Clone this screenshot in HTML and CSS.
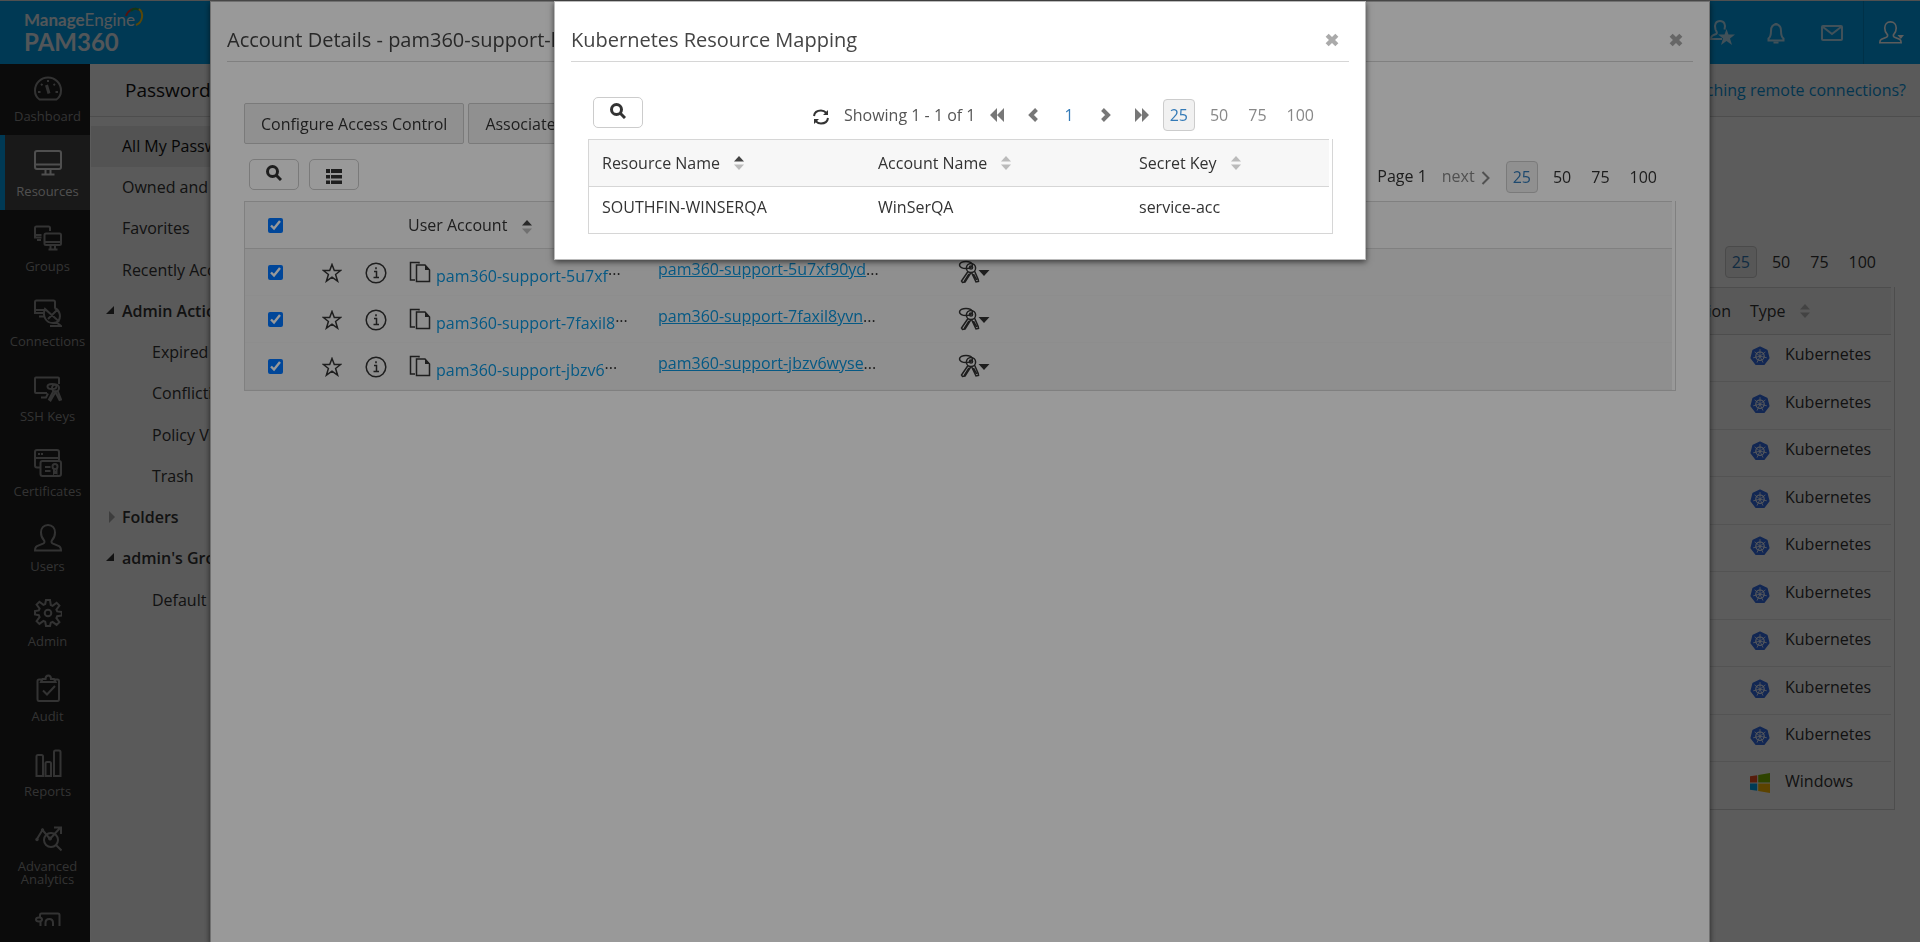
FILE: index.html
```html
<!DOCTYPE html>
<html lang="en">
<head>
    <meta charset="UTF-8">
    <meta name="viewport" content="width=device-width, initial-scale=1.0">
    <title>ManageEngine PAM360</title>
    <link rel="stylesheet" href="styles.css">
</head>
<body>

<!-- shared icons -->
<svg class="sprite" aria-hidden="true">
    <symbol id="i-user" viewBox="0 0 28 28"><path d="M14 1C9.500 1 7 4.500 7 8.500c0 3.500 1.200 6 3 7.800 1 1.200.5 2.700-1 3.400L3 22.200c-1.500.7-2 1.800-2 4.300h26c0-2.500-.5-3.600-2-4.300l-6-2.500c-1.500-.7-2-2.200-1-3.400 1.800-1.800 3-4.300 3-7.800C21 4.500 18.500 1 14 1z"/></symbol>
    <symbol id="i-search" viewBox="0 0 16 16"><circle cx="6.500" cy="6.500" r="5"/><path d="M10.300 10.300L15 15"/></symbol>
    <symbol id="i-close" viewBox="0 0 13 13"><path d="M2 2l9 9M11 2l-9 9"/></symbol>
    <symbol id="i-sort" viewBox="0 0 10 14"><path class="sort-up" d="M0 5.500L5 0l5 5.500z"/><path class="sort-down" d="M0 8.500h10L5 14z"/></symbol>
    <symbol id="i-star" viewBox="0 0 20 20"><path d="M10 1.500l2.300 6h6.300l-5 4 2 6.700L10 14.200l-5.600 4 2-6.700-5-4h6.300z"/></symbol>
    <symbol id="i-info" viewBox="0 0 22 22"><circle cx="11" cy="11" r="9.800"/><path d="M9 9.500h2.500v6M8.500 15.500h5.500"/><path d="M10.200 6.300h1.600" stroke-width="2"/></symbol>
    <symbol id="i-copy" viewBox="0 0 22 22"><path d="M6 19H1.500V1.500H10V2.500"/><path d="M7.500 4h8.500l4.500 5v11.500h-13z"/><path class="fold" d="M16 4v5h4.500z"/></symbol>
    <symbol id="i-keys" viewBox="0 0 32 24">
        <ellipse cx="8" cy="5" rx="6.500" ry="3.600"/>
        <circle cx="13" cy="8" r="4.600"/><circle cx="13" cy="7.500" r="1.600"/>
        <path d="M10 11.500L3.500 21l1 1.500 2.500-.5 6-9.500M11 14l-5 8"/>
        <path d="M13.500 12.500L18 22l2.500-.5-.3-2L16.500 11M15.500 14l3.300 6"/>
        <path class="fold" d="M20.500 10h11l-5.500 6z"/>
    </symbol>
    <symbol id="i-k8s" viewBox="0 0 20 20">
        <path fill="#326ce5" stroke="#326ce5" stroke-width="1.500" stroke-linejoin="round" d="M10 1.200l6.900 3.300 1.900 7.500-4.800 6.300H6L1.200 12l1.900-7.500z"/>
        <g fill="none" stroke="#fff"><circle cx="10" cy="10.200" r="4.200" stroke-width="1.100"/>
        <path stroke-width=".8" d="M10 3.200v7M4.600 5.900l5.400 4.300M15.400 5.900L10 10.200M3.200 11.800l6.800-1.600M16.800 11.800L10 10.200M7 16.600l3-6.400M13 16.600l-3-6.400"/></g>
    </symbol>
    <symbol id="i-win" viewBox="0 0 20 20"><path fill="#f25022" d="M0 3.200l7.200-1v7.200H0z"/><path fill="#7fba00" d="M8.200 2L20 0v9.400H8.200z"/><path fill="#00a4ef" d="M0 10.600h7.200v7.200L0 16.800z"/><path fill="#ffb900" d="M8.200 10.600H20V20L8.200 18z"/></symbol>
</svg>

<div class="app">
    <header class="topbar">
        <div class="logo">
            <div class="brand"><b>Manage</b>Engine
                <svg class="swoosh" viewBox="0 0 20 22"><path d="M1 9C3 3 9 0 14 3" stroke="#e5352c"/><path d="M6 4c3-3 8-3 11 1" stroke="#22a24a"/><path d="M14 2c5 4 4 13-3 16" stroke="#f5c518"/></svg>
            </div>
            <div class="product">PAM360</div>
        </div>
        <div class="top-icons">
            <button class="top-button" aria-label="Request access"><svg width="28" height="28" viewBox="0 0 28 28"><path d="M13 20H2c0-3 1-3.500 5-5 2-1 0-3-.5-4.500C5 5 7 2 11 2s6 3 4.500 8.500"/><path class="solid" d="M17.500 10l2 5.500H26l-5 4 2 6.500-5.500-4-5.500 4 2-6.500-5-4h6.500z"/></svg></button>
            <button class="top-button" aria-label="Notifications"><svg width="18" height="22" viewBox="0 0 18 22"><path d="M9 2.500C5.500 2.500 4 5.500 4 9c0 4-.5 6-2.500 7.500V18.500h15v-2C14.500 15 14 13 14 9c0-3.500-1.500-6.500-5-6.500z"/><path d="M7.500 2h3M6.500 20.500h5"/></svg></button>
            <button class="top-button" aria-label="Messages"><svg width="22" height="16" viewBox="0 0 22 16"><rect x="1" y="1" width="20" height="14" rx="1"/><path d="M2 2l9 7 9-7"/></svg></button>
            <button class="top-button profile" aria-label="Profile"><svg width="26" height="24" viewBox="0 0 26 24"><g transform="scale(.82)"><use href="#i-user" width="28" height="28"/></g><path class="solid" d="M18.500 14H25l-3.200 4z"/></svg></button>
        </div>
    </header>

    <div class="body">
        <nav class="nav">
            <div class="nav-list">
                <a class="nav-item" href="#"><svg viewBox="0 0 28 28"><path d="M5.500 25.500C2.500 23.500 1 20 1 16.500 1 9 7 3.500 14 3.500S27 9 27 16.500c0 3.500-1.500 7-4.500 9z"/><path d="M12.500 11l2.500 8.500" stroke-width="3"/><path d="M14 6v2M7 10l1.500 1.200M21 10l-1.500 1.200M4 18h2.500M21.500 18H24"/></svg>Dashboard</a>
                <a class="nav-item active" href="#"><svg viewBox="0 0 28 28"><rect x="1" y="2" width="26" height="18" rx="2"/><path d="M1 15.500h26M11.500 20v5M16.500 20v5M7.500 25.500h13"/></svg>Resources</a>
                <a class="nav-item" href="#"><svg viewBox="0 0 28 28"><path d="M7.500 11H1V4c0-1 .5-1.500 1.500-1.500h12c1 0 1.500.5 1.500 1.500v3M1 11.500v2h6.500M3 16h4"/><rect x="10.500" y="9.500" width="16.500" height="11.500" rx="1.500"/><path d="M10.500 18H27M16.500 21v4M21 21v4M14.500 25.500h9"/></svg>Groups</a>
                <a class="nav-item" href="#"><svg viewBox="0 0 28 28"><path d="M10 14H1V3c0-1 .5-1.500 1.500-1.500h17c1 0 1.500.5 1.500 1.500v6M1 11h9M5 17.500h5"/><path d="M11 10c-3 7 1 14 8 14 3 0 4.500-1 5.500-2L11 10zM14 20l10-10M24.500 22c3-5 1-11-4-13M22 23l5 4H16"/></svg>Connections</a>
                <a class="nav-item" href="#"><svg viewBox="0 0 28 28"><path d="M13 19H2c-.7 0-1-.3-1-1V4.500C1 4 1.300 3.500 2 3.500h22c.7 0 1 .5 1 1V10M7 23.500h5l2-4"/><ellipse cx="18" cy="12.500" rx="4.500" ry="2.500"/><circle cx="21.500" cy="14" r="3.500"/><path d="M19.500 17L15 25.500l1.500 1 5-8.500L25.500 26l1.500-.500-3.500-9"/></svg>SSH Keys</a>
                <a class="nav-item" href="#"><svg viewBox="0 0 28 28"><path d="M6.500 18.500H3c-1.300 0-2-.7-2-2V3c0-1.300.7-2 2-2h20c1.300 0 2 .7 2 2v8M1 9h24M4 5h2M7 5h2"/><rect x="6.500" y="12" width="20.500" height="15" rx="2"/><circle cx="21" cy="17.500" r="2.500"/><path d="M20 20v4l1-1 1.500 1v-4M11 18h5.500M11 22h5.500"/></svg>Certificates</a>
                <a class="nav-item" href="#"><svg viewBox="0 0 28 28"><use href="#i-user"/></svg>Users</a>
                <a class="nav-item" href="#"><svg viewBox="0 0 28 28"><circle cx="14" cy="14" r="3.300"/><path d="M12 1h4l.8 5 1.800.8 4-3 2.800 2.800-3 4 .8 1.800 4.600.6v3.500l-4.600.7-.8 2 3 4-2.800 2.700-4-3-1.800.8L16 27h-4l-.8-4.300-1.800-.8-4 3-2.800-2.700 3-4-.8-2L1 15.500V12l3.800-.6.8-1.800-3-4 2.800-2.800 4 3 1.800-.8z"/></svg>Admin</a>
                <a class="nav-item" href="#"><svg viewBox="0 0 28 28"><path d="M8 5.500H5C4 5.500 3.500 6 3.500 7v18c0 1.200.6 2 1.500 2h18.500c1 0 1.500-.8 1.500-2V7c0-1-.5-1.500-1.500-1.500H21M7 8h14.500l-1.500-3h-3c0-2-1-3.500-2.700-3.500S11.500 3 11.500 5h-3zM9 16.500l4 4 8-8.500"/></svg>Audit</a>
                <a class="nav-item" href="#"><svg viewBox="0 0 28 28"><path d="M2.500 27V7.500c0-1 .5-1.500 1.500-1.500h3.500C8.500 6 9 6.500 9 7.500V27zM11.500 27V14.500c0-1 .5-1.500 1.500-1.500h2.500c1 0 1.500.5 1.500 1.500V27zM20 27V3c0-1 .5-1.500 1.500-1.500H25c1 0 1.500.5 1.500 1.500v24z"/></svg>Reports</a>
                <a class="nav-item" href="#"><svg viewBox="0 0 28 28"><path d="M3 15l5.500-9L16 15 26 4M20 3.500h7V10"/><circle cx="17" cy="16" r="7"/><path d="M22 21l5.500 5.500"/><g class="solid"><circle cx="3" cy="15.500" r="1.700"/><circle cx="8.500" cy="6" r="1.700"/><circle cx="16" cy="14.500" r="2"/></g></svg>Advanced Analytics</a>
                <a class="nav-item" href="#" aria-label="Sessions"><svg viewBox="0 0 28 28"><path d="M6 5V3c0-1 .5-1.500 1.500-1.500H24c1 0 1.500.5 1.500 1.500v24M6.500 10v17"/><ellipse cx="5" cy="7.500" rx="3" ry="2"/><path d="M11.500 15v-4c0-2 1-4 3.700-4S19 9 19 11v4"/></svg></a>
            </div>
        </nav>

        <div class="content">
            <div class="title-bar">
                <h1>Passwords</h1>
                <a href="#">Trouble launching remote connections?</a>
            </div>
            <div class="columns">
                <ul class="side">
                    <li class="selected">All My Passwords</li>
                    <li>Owned and Managed</li>
                    <li>Favorites</li>
                    <li>Recently Accessed</li>
                    <li class="group open">Admin Actions</li>
                    <li class="child">Expired Passwords</li>
                    <li class="child">Conflicting Passwords</li>
                    <li class="child">Policy Violations</li>
                    <li class="child">Trash</li>
                    <li class="group">Folders</li>
                    <li class="group open">admin's Groups</li>
                    <li class="child">Default Group</li>
                </ul>
                <main class="main">
                    <div class="sizes"><button class="current">25</button><button>50</button><button>75</button><button>100</button></div>
                    <div class="grid">
                        <table class="resources">
                            <thead><tr><th class="desc">Description</th><th class="type">Type <svg class="sort"><use href="#i-sort"/></svg></th></tr></thead>
                            <tbody>
                                <tr><td></td><td class="type"><svg class="os"><use href="#i-k8s"/></svg>Kubernetes</td></tr>
                                <tr><td></td><td class="type"><svg class="os"><use href="#i-k8s"/></svg>Kubernetes</td></tr>
                                <tr><td></td><td class="type"><svg class="os"><use href="#i-k8s"/></svg>Kubernetes</td></tr>
                                <tr><td></td><td class="type"><svg class="os"><use href="#i-k8s"/></svg>Kubernetes</td></tr>
                                <tr><td></td><td class="type"><svg class="os"><use href="#i-k8s"/></svg>Kubernetes</td></tr>
                                <tr><td></td><td class="type"><svg class="os"><use href="#i-k8s"/></svg>Kubernetes</td></tr>
                                <tr><td></td><td class="type"><svg class="os"><use href="#i-k8s"/></svg>Kubernetes</td></tr>
                                <tr><td></td><td class="type"><svg class="os"><use href="#i-k8s"/></svg>Kubernetes</td></tr>
                                <tr><td></td><td class="type"><svg class="os"><use href="#i-k8s"/></svg>Kubernetes</td></tr>
                                <tr><td></td><td class="type"><svg class="os"><use href="#i-win"/></svg>Windows</td></tr>
                            </tbody>
                        </table>
                    </div>
                </main>
            </div>
        </div>
    </div>
</div>

<!-- account details -->
<div class="overlay">
    <section class="modal details">
        <div class="modal-head">
            <h2>Account Details - pam360-support-k8s</h2>
            <button class="close" aria-label="Close"><svg><use href="#i-close"/></svg></button>
        </div>
        <div class="modal-body">
            <div class="actions"><button>Configure Access Control</button><button>Associate Resources</button></div>
            <div class="tools">
                <button class="tool" aria-label="Search"><svg class="search"><use href="#i-search"/></svg></button>
                <button class="tool list" aria-label="Columns"><svg width="16" height="15" viewBox="0 0 16 15"><path d="M0 0h4v4H0zM5 0h11v4H5zM0 6h4v3.500H0zM5 6h11v3.500H5zM0 11.500h4V15H0zM5 11.500h11V15H5z"/></svg></button>
                <div class="pager"><span class="page">Page 1</span><span class="next">next <svg width="9" height="14" viewBox="0 0 9 14"><path d="M1.500 1l6 6-6 6"/></svg></span></div>
                <div class="sizes"><button class="current">25</button><button>50</button><button>75</button><button>100</button></div>
            </div>
            <div class="grid">
                <table class="accounts">
                    <thead>
                        <tr><th class="check"><input type="checkbox" aria-label="Select all" checked></th><th class="icon"></th><th class="icon"></th><th class="user">User Account <svg class="sort asc"><use href="#i-sort"/></svg></th><th class="name"></th><th></th></tr>
                    </thead>
                    <tbody>
                        <tr>
                            <td class="check"><input type="checkbox" aria-label="Select account" checked></td>
                            <td class="icon"><svg class="star"><use href="#i-star"/></svg></td>
                            <td class="icon"><svg class="info"><use href="#i-info"/></svg></td>
                            <td><div class="account"><svg class="copy"><use href="#i-copy"/></svg><a href="#">pam360-support-5u7xf</a><span>...</span></div></td>
                            <td class="name"><a href="#">pam360-support-5u7xf90yd</a>...</td>
                            <td><svg class="keys"><use href="#i-keys"/></svg></td>
                        </tr>
                        <tr>
                            <td class="check"><input type="checkbox" aria-label="Select account" checked></td>
                            <td class="icon"><svg class="star"><use href="#i-star"/></svg></td>
                            <td class="icon"><svg class="info"><use href="#i-info"/></svg></td>
                            <td><div class="account"><svg class="copy"><use href="#i-copy"/></svg><a href="#">pam360-support-7faxil8</a><span>...</span></div></td>
                            <td class="name"><a href="#">pam360-support-7faxil8yvn</a>...</td>
                            <td><svg class="keys"><use href="#i-keys"/></svg></td>
                        </tr>
                        <tr>
                            <td class="check"><input type="checkbox" aria-label="Select account" checked></td>
                            <td class="icon"><svg class="star"><use href="#i-star"/></svg></td>
                            <td class="icon"><svg class="info"><use href="#i-info"/></svg></td>
                            <td><div class="account"><svg class="copy"><use href="#i-copy"/></svg><a href="#">pam360-support-jbzv6</a><span>...</span></div></td>
                            <td class="name"><a href="#">pam360-support-jbzv6wyse</a>...</td>
                            <td><svg class="keys"><use href="#i-keys"/></svg></td>
                        </tr>
                    </tbody>
                </table>
            </div>
        </div>
    </section>
</div>

<!-- resource mapping -->
<div class="overlay">
    <section class="modal mapping">
        <div class="modal-head">
            <h2>Kubernetes Resource Mapping</h2>
            <button class="close" aria-label="Close"><svg><use href="#i-close"/></svg></button>
        </div>
        <div class="modal-body">
            <div class="tools">
                <button class="tool" aria-label="Search"><svg class="search"><use href="#i-search"/></svg></button>
                <div class="pager">
                    <svg class="refresh" viewBox="0 0 16 16"><path d="M1 7c.5-3.500 3.500-5.500 7-5.500 2.500 0 4 1 5.500 2.500M15 9c-.5 3.500-3.500 5.500-7 5.500-2.500 0-4-1-5.500-2.500"/><path class="fold" d="M15 1v5h-5zM1 15v-5h5z"/></svg>
                    <span>Showing 1 - 1 of 1</span>
                </div>
                <div class="steps">
                    <button aria-label="First page"><svg width="14" height="14" viewBox="0 0 14 14"><path class="fold" d="M7 0v14L0 7zM14 0v14L7 7z"/></svg></button>
                    <button aria-label="Previous page"><svg width="10" height="14" viewBox="0 0 10 14"><path d="M8.500 1.500L3 7l5.500 5.500"/></svg></button>
                    <a href="#">1</a>
                    <button aria-label="Next page"><svg width="10" height="14" viewBox="0 0 10 14"><path d="M1.500 1.500L7 7l-5.500 5.500"/></svg></button>
                    <button aria-label="Last page"><svg width="14" height="14" viewBox="0 0 14 14"><path class="fold" d="M0 0v14l7-7zM7 0v14l7-7z"/></svg></button>
                </div>
                <div class="sizes muted"><button class="current">25</button><button>50</button><button>75</button><button>100</button></div>
            </div>
            <div class="grid">
                <table class="mappings">
                    <thead>
                        <tr><th class="resource">Resource Name <svg class="sort asc"><use href="#i-sort"/></svg></th><th class="acct">Account Name <svg class="sort"><use href="#i-sort"/></svg></th><th>Secret Key <svg class="sort"><use href="#i-sort"/></svg></th></tr>
                    </thead>
                    <tbody>
                        <tr><td>SOUTHFIN-WINSERQA</td><td>WinSerQA</td><td>service-acc</td></tr>
                    </tbody>
                </table>
            </div>
        </div>
    </section>
</div>

</body>
</html>
```
FILE: styles.css
```css
* {
    box-sizing: border-box;
    margin: 0;
    padding: 0;
}
body {
    height: 100vh;
    overflow: hidden;
    font-family: "Open Sans", "Liberation Sans", sans-serif;
    font-size: 16px;
    line-height: 22px;
    color: #333;
    background-color: #fff;
}
button {
    font: inherit;
    color: inherit;
    background: none;
    border: none;
    cursor: pointer;
}
a {
    color: #0a94dc;
    text-decoration: none;
}
svg {
    fill: none;
    stroke: currentColor;
    flex: none;
}
.sprite {
    display: none;
}
.solid, .fold {
    fill: currentColor;
    stroke: none;
}

/* page */
.app {
    height: 100vh;
    display: flex;
    flex-direction: column;
    border-top: 1px solid #ddd;
}
.topbar {
    flex: none;
    height: 63px;
    display: flex;
    justify-content: space-between;
    background-color: #009fe8;
    color: #b5dff5;
}
.logo {
    padding: 8px 0 0 24px;
    font-family: Lato, sans-serif;
    color: #e4eef5;
}
.brand {
    position: relative;
    font-size: 17px;
    line-height: 22px;
}
.swoosh {
    position: absolute;
    top: -2px;
    right: -10px;
    width: 20px;
    height: 22px;
    stroke-width: 2;
}
.product {
    font-size: 24px;
    line-height: 22px;
    font-weight: bold;
}
.top-icons {
    display: flex;
}
.top-button {
    width: 56px;
    display: flex;
    align-items: center;
    justify-content: center;
}
.top-button:first-child {
    width: 50px;
}
.top-button svg {
    stroke-width: 2;
}
.profile {
    width: 57px;
    margin-left: 3px;
    border-left: 1px solid #0088c8;
    color: #fff;
}
.body {
    flex: 1;
    min-height: 0;
    display: flex;
}
.nav {
    width: 90px;
    padding-bottom: 16px;
    background-color: #1f1f1f;
}
.nav-list {
    height: 100%;
    overflow: hidden;
}
.nav-item {
    display: flex;
    flex-direction: column;
    align-items: center;
    min-height: 75px;
    padding: 14px 0 12px 0;
    border-left: 5px solid transparent;
    font-size: 13px;
    line-height: 13px;
    text-align: center;
    color: #8e8e8e;
}
.nav-item:first-child {
    min-height: 71px;
    padding-top: 10px;
}
.nav-item svg {
    width: 28px;
    height: 28px;
    margin-bottom: 8px;
    stroke-width: 2;
}
.nav-item.active {
    background-color: #464646;
    border-left-color: #009fe8;
    color: #dcdcdc;
}
.content {
    flex: 1;
    min-width: 0;
    display: flex;
    flex-direction: column;
}
.title-bar {
    display: flex;
    align-items: center;
    justify-content: space-between;
    height: 53px;
    padding: 0 14px 0 35px;
    background-color: #f8f8f8;
    border-bottom: 1px solid #d5d5d5;
}
.title-bar h1 {
    font-size: 19px;
    font-weight: normal;
    color: #111;
}
.columns {
    flex: 1;
    display: flex;
}
.side {
    width: 300px;
    padding-top: 9px;
    list-style: none;
    background-color: #f8f8f8;
    border-left: 1px solid #fff;
}
.side li {
    position: relative;
    height: 41px;
    padding-left: 31px;
    line-height: 41px;
}
.side li:nth-child(4n+3) {
    height: 42px;
}
.side .selected {
    background-color: #e6e6e6;
    color: #111;
}
.side .child {
    padding-left: 61px;
}
.side .group {
    font-weight: 600;
}
.side .group::before {
    content: "";
    position: absolute;
    left: 18px;
    top: 14px;
    border: 6px solid transparent;
    border-left-color: #aaa;
    border-right-width: 0;
}
.side .open::before {
    left: 15px;
    border: none;
    border-bottom: 8px solid #333;
    border-left: 8px solid transparent;
    top: 15px;
}
.main {
    flex: 1;
    padding: 129px 25px 0 25px;
}

/* page sizes */
.sizes {
    display: flex;
    justify-content: flex-end;
    align-items: center;
}
.sizes button {
    padding: 0 7px;
    margin-left: 6px;
}
.sizes .current {
    height: 32px;
    padding: 0 6px;
    margin: 0 2px 0 4px;
    color: #337ab7;
    background-color: #f1f1f1;
    border: 1px solid #ccc;
    border-radius: 4px;
}
.main .sizes {
    padding-right: 12px;
    margin-bottom: 9px;
}
.muted button {
    color: #888;
}

/* tables */
.grid {
    padding-right: 3px;
    border: 1px solid #d6d6d6;
    border-top: none;
}
table {
    width: 100%;
    table-layout: fixed;
    border-collapse: collapse;
}
th {
    height: 47px;
    font-weight: normal;
    text-align: left;
    background-color: #f7f7f7;
    border-top: 1px solid #d6d6d6;
    border-bottom: 1px solid #d6d6d6;
}
.sort {
    width: 10px;
    height: 14px;
    margin-left: 10px;
    vertical-align: -1px;
    stroke: none;
    color: #bbb;
}
.asc {
    color: #444;
}
.sort-up {
    fill: currentColor;
}
.sort-down {
    fill: #bbb;
}
.resources .desc {
    text-align: right;
    padding-right: 10px;
}
.resources .type {
    width: 150px;
    padding-left: 9px;
}
.resources td {
    height: 47px;
    padding-bottom: 7px;
    border-bottom: 1px solid #e6e6e6;
}
.resources tr:nth-child(even) td {
    height: 48px;
}
.resources tr:last-child td {
    height: 47px;
    border-bottom: none;
}
.os {
    width: 20px;
    height: 20px;
    margin-right: 15px;
    vertical-align: -6px;
    stroke: none;
}

/* dialogs */
.overlay {
    position: fixed;
    inset: 0;
    display: flex;
    justify-content: center;
    align-items: flex-start;
    padding-top: 1px;
    background-color: rgba(0, 0, 0, 0.4);
}
.modal {
    background-color: #fff;
    border: 1px solid #bbb;
    box-shadow: 0 2px 6px rgba(0, 0, 0, 0.6);
}
.details {
    flex: 1;
    height: 100vh;
    margin: 0 210px;
}
.mapping {
    width: 812px;
}
.modal-head {
    display: flex;
    align-items: center;
    justify-content: space-between;
    height: 60px;
    margin: 0 16px;
    padding: 16px 10px 0 0;
    border-bottom: 1px solid #d6d6d6;
}
.modal-head h2 {
    font-size: 20px;
    font-weight: normal;
    color: #444;
}
.close {
    height: 14px;
    color: #aaa;
}
.close svg {
    display: block;
    width: 14px;
    height: 14px;
    stroke-width: 4;
}
.modal-body {
    padding: 41px 33px 25px 33px;
}
.mapping .modal-body {
    padding: 35px 32px 25px 33px;
}
.actions {
    display: flex;
    gap: 4px;
    margin-bottom: 15px;
}
.actions button {
    height: 41px;
    padding: 0 16px;
    background-color: #f1f1f1;
    border: 1px solid #ccc;
    border-radius: 2px;
}
.tools {
    display: flex;
    align-items: center;
    gap: 10px;
    padding: 0 12px 0 5px;
    margin-bottom: 7px;
}
.tool {
    display: flex;
    align-items: center;
    justify-content: center;
    width: 50px;
    height: 31px;
    margin-bottom: 4px;
    border: 1px solid #ccc;
    border-radius: 5px;
    color: #333;
}
.tool .search {
    width: 16px;
    height: 16px;
    margin-bottom: 3px;
    stroke-width: 3;
}
.list svg {
    margin-top: 4px;
    fill: currentColor;
    stroke: none;
}
.pager {
    display: flex;
    align-items: center;
    gap: 15px;
    margin-left: auto;
}
.details .pager {
    margin-right: 2px;
    padding-bottom: 2px;
}
.next {
    display: flex;
    align-items: center;
    gap: 6px;
    color: #888;
}
.next svg {
    margin-top: 4px;
    stroke-width: 2;
}
.refresh {
    width: 16px;
    height: 16px;
    margin-top: 4px;
    stroke-width: 2;
    color: #333;
}
.mapping .pager {
    color: #555;
}
.steps {
    display: flex;
    align-items: center;
    gap: 24px;
    margin-left: 4px;
    color: #777;
}
.steps button, .steps svg {
    display: block;
    stroke-width: 4;
}
.steps a {
    padding: 0 3px;
    color: #337ab7;
}

.accounts td {
    height: 47px;
    background-color: #efefef;
    border-bottom: 1px solid #ececec;
}
.accounts svg {
    vertical-align: middle;
}
.accounts .check {
    width: 65px;
    padding-left: 23px;
}
.accounts input {
    display: block;
    width: 15px;
    height: 15px;
}
.accounts .icon {
    width: 44px;
    text-align: center;
}
.accounts .user {
    width: 260px;
    padding-left: 10px;
}
.accounts .name {
    width: 300px;
    padding-bottom: 6px;
}
.name a {
    text-decoration: underline;
}
.star {
    width: 20px;
    height: 20px;
    stroke-width: 1.5px;
}
.info, .copy {
    width: 22px;
    height: 22px;
    stroke-width: 1.5px;
}
.account {
    display: flex;
    align-items: center;
    padding-left: 11px;
}
.account a {
    margin: 7px 0 0 5px;
}
.account span {
    margin-bottom: 6px;
}
.keys {
    width: 32px;
    height: 24px;
    stroke-width: 1.5px;
}

.mappings .resource {
    width: 276px;
}
.mappings .acct {
    width: 261px;
}
.mappings th, .mappings td {
    padding-left: 13px;
}
.mappings td {
    height: 46px;
    padding-bottom: 6px;
}
```
